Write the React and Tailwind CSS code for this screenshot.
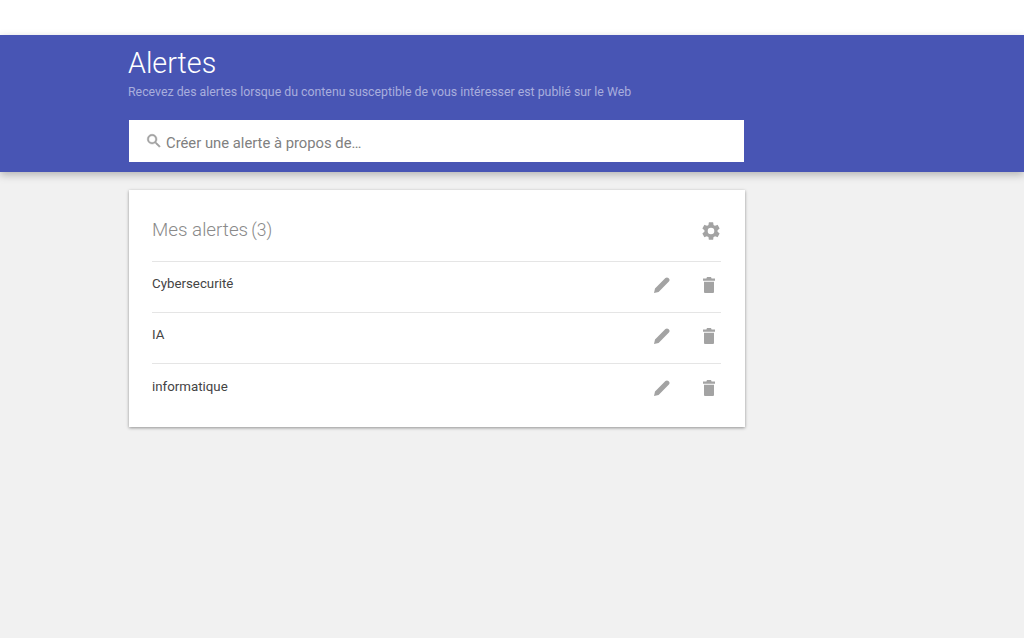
import React from 'react';

const SearchIcon = () => (
  <svg viewBox="0 0 24 24" className="w-[18px] h-[18px] fill-[#a0a0a0] stroke-[#a0a0a0] stroke-[0.6] shrink-0">
    <path d="M15.5 14h-.79l-.28-.27A6.47 6.47 0 0 0 16 9.5 6.5 6.5 0 1 0 9.5 16c1.61 0 3.09-.59 4.23-1.57l.27.28v.79l5 4.99L20.49 19l-4.99-5zm-6 0C7.01 14 5 11.99 5 9.5S7.01 5 9.5 5 14 7.01 14 9.5 11.99 14 9.5 14z" />
  </svg>
);

const GearIcon = () => (
  <svg viewBox="0 0 24 24" className="w-[22px] h-[22px] fill-[#a3a3a3]">
    <path d="M19.14 12.94c.04-.3.06-.61.06-.94s-.02-.64-.07-.94l2.03-1.58a.49.49 0 0 0 .12-.61l-1.92-3.32a.49.49 0 0 0-.59-.22l-2.39.96a7.03 7.03 0 0 0-1.62-.94l-.36-2.54a.48.48 0 0 0-.48-.41h-3.84a.48.48 0 0 0-.47.41l-.36 2.54c-.59.24-1.13.57-1.62.94l-2.39-.96a.49.49 0 0 0-.59.22L2.73 8.87a.48.48 0 0 0 .12.61l2.03 1.58c-.05.3-.08.63-.08.94s.02.64.07.94l-2.03 1.58a.49.49 0 0 0-.12.61l1.92 3.32c.12.22.37.29.59.22l2.39-.96c.5.38 1.03.7 1.62.94l.36 2.54c.05.24.24.41.48.41h3.84c.24 0 .44-.17.47-.41l.36-2.54c.59-.24 1.13-.56 1.62-.94l2.39.96c.22.08.47 0 .59-.22l1.92-3.32a.48.48 0 0 0-.12-.61l-2.01-1.58zM12 15.6A3.6 3.6 0 1 1 12 8.4a3.6 3.6 0 0 1 0 7.2z" />
  </svg>
);

const PencilIcon = () => (
  <svg viewBox="0 0 16 16" className="w-4 h-4 fill-[#a3a3a3]">
    <path d="M0 16l1-4.6L11.4 1.1c.9-.9 2.2-.9 3 0l.5.5c.9.9.9 2.1 0 3L4.6 15 0 16z" />
  </svg>
);

const TrashIcon = () => (
  <svg viewBox="0 0 12 16" className="w-3 h-4 fill-[#a3a3a3]">
    <path d="M4 0h4l.6 1.6H12v2.200H0V1.600h3.400L4 0zM1 4.700h10v10c0 .7-.5 1.300-1.200 1.300H2.200C1.500 16 1 15.400 1 14.700v-10z" />
  </svg>
);

const alerts = ['Cybersecurité', 'IA', 'informatique'];

const App = () => {
  return (
    <div className="min-h-[638px] bg-[#f1f1f1] font-['Roboto',sans-serif] flex flex-col">
      {/* Top white strip */}
      <div className="h-[35px] bg-white" />

      {/* Header */}
      <header className="h-[137px] bg-[#4855b4] pl-[128px] shadow-[0_3px_8px_rgba(0,0,0,0.25)]">
        <h1 className="pt-[9px] text-[28.7px] leading-[38px] font-light text-white">Alertes</h1>
        <p className="mt-[1px] text-[12.33px] leading-[18px] text-[#a8aedd]">
          Recevez des alertes lorsque du contenu susceptible de vous intéresser est publié sur le Web
        </p>
        <div className="mt-[19px] ml-[1px] w-[615px] h-[42px] bg-white flex items-center pl-[16px] gap-[3px]">
          <SearchIcon />
          <span className="text-[14.8px] text-[#808080] font-normal mt-[4px]">Créer une alerte à propos de…</span>
        </div>
      </header>

      {/* Alerts card */}
      <main className="pl-[129px] pt-[18px]">
        <div className="w-[616px] h-[237px] bg-white pl-[23px] pr-[24px] shadow-[0_1px_3px_rgba(0,0,0,0.4)]">
          <div className="h-[72px] flex items-center justify-between border-b border-[#e5e5e5]">
            <div className="flex items-baseline gap-[3px] text-[#8a8a8a] font-light mt-[10px]">
              <span className="text-[18.8px]">Mes alertes</span>
              <span className="text-[17.5px]">(3)</span>
            </div>
            <div className="mr-[-1px] mt-[10px]"><GearIcon /></div>
          </div>
          {alerts.map((name, i) => (
            <div key={name} className={`h-[51px] flex items-center justify-between ${i < 2 ? 'border-b border-[#e5e5e5]' : ''}`}>
              <span className="text-[13.3px] text-[#444444] -mt-[6px]">{name}</span>
              <div className="flex items-center gap-[33px] mr-[6px] -mt-[4px]">
                <PencilIcon />
                <TrashIcon />
              </div>
            </div>
          ))}
        </div>
      </main>
    </div>
  );
};

export default App;
